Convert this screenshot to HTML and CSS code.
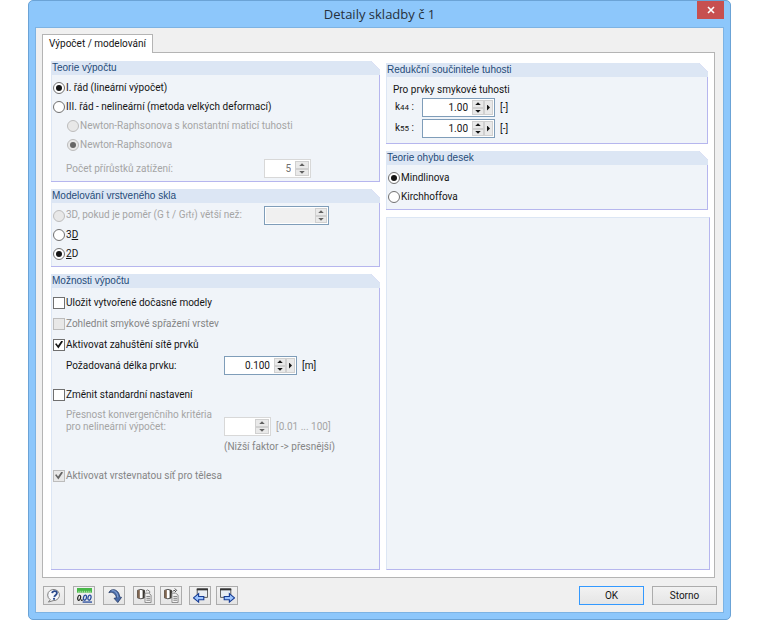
FILE: index.html
```html
<!DOCTYPE html>
<html lang="cs">
<head>
<meta charset="utf-8">
<title>Detaily skladby č 1</title>
<link rel="stylesheet" href="styles.css">
</head>
<body>
<div class="window">
  <header class="titlebar">
    <h1>Detaily skladby č 1</h1>
    <button class="close" type="button" aria-label="Zavřít"><svg width="8" height="8" viewBox="0 0 8 8"><path d="M1 1l6 6M7 1L1 7" stroke="#fff" stroke-width="1.6"/></svg></button>
  </header>
  <form class="client">
    <div class="tabs"><button class="tab" type="button">Výpočet / modelování</button></div>
    <main class="page">
      <div class="column">
        <section class="panel">
          <h2>Teorie výpočtu</h2>
          <div class="body">
            <label class="row"><input type="radio" name="theory" checked>I. řád (lineární výpočet)</label>
            <label class="row"><input type="radio" name="theory">III. řád - nelineární (metoda velkých deformací)</label>
            <label class="row nested off"><input type="radio" name="method" disabled>Newton-Raphsonova s konstantní maticí tuhosti</label>
            <label class="row nested off"><input type="radio" name="method" checked disabled>Newton-Raphsonova</label>
            <div class="row field wide spaced off">
              <label class="indent" for="steps">Počet přírůstků zatížení:</label>
              <span class="spin short disabled"><input id="steps" type="text" value="5" disabled><span class="arrows"><button type="button" class="up" aria-label="Více" disabled></button><button type="button" class="down" aria-label="Méně" disabled></button></span></span>
            </div>
          </div>
        </section>
        <section class="panel">
          <h2>Modelování vrstveného skla</h2>
          <div class="body">
            <div class="row field wide off">
              <label class="choice"><input type="radio" name="model" disabled><span>3D, pokud je poměr (G t / G<small>f</small>t<small>f</small>) větší než:</span></label>
              <span class="spin medium empty"><input type="text" aria-label="Poměr" disabled><span class="arrows"><button type="button" class="up" aria-label="Více" disabled></button><button type="button" class="down" aria-label="Méně" disabled></button></span></span>
            </div>
            <label class="row"><input type="radio" name="model"><span>3<u>D</u></span></label>
            <label class="row"><input type="radio" name="model" checked><span><u>2</u>D</span></label>
          </div>
        </section>
        <section class="panel options">
          <h2>Možnosti výpočtu</h2>
          <div class="body">
            <label class="row"><input type="checkbox">Uložit vytvořené dočasné modely</label>
            <label class="row dim"><input type="checkbox" disabled>Zohlednit smykové spřažení vrstev</label>
            <label class="row"><input type="checkbox" checked>Aktivovat zahuštění sítě prvků</label>
            <div class="row field">
              <label class="indent" for="length">Požadovaná délka prvku:</label>
              <span class="spin"><input id="length" type="text" value="0.100"><span class="arrows"><button type="button" class="up" aria-label="Více"></button><button type="button" class="down" aria-label="Méně"></button></span><button type="button" class="more" aria-label="Další"></button></span>
              <span class="unit">[m]</span>
            </div>
            <label class="row spaced"><input type="checkbox">Změnit standardní nastavení</label>
            <div class="field tall off">
              <label class="indent" for="precision">Přesnost konvergenčního kritéria<br>pro nelineární výpočet:</label>
              <span class="spin short disabled"><input id="precision" type="text" disabled><span class="arrows"><button type="button" class="up" aria-label="Více" disabled></button><button type="button" class="down" aria-label="Méně" disabled></button></span></span>
              <span class="unit">[0.01 ... 100]</span>
            </div>
            <div class="row field dim"><span class="note">(Nižší faktor -&gt; přesnější)</span></div>
            <label class="row spaced dim"><input type="checkbox" checked disabled>Aktivovat vrstevnatou síť pro tělesa</label>
          </div>
        </section>
      </div>
      <div class="column right">
        <section class="panel">
          <h2>Redukční součinitele tuhosti</h2>
          <div class="body stiffness">
            <p>Pro prvky smykové tuhosti</p>
            <div class="row factor">
              <label for="k44">k<small>44</small> :</label>
              <span class="spin"><input id="k44" type="text" value="1.00"><span class="arrows"><button type="button" class="up" aria-label="Více"></button><button type="button" class="down" aria-label="Méně"></button></span><button type="button" class="more" aria-label="Další"></button></span>
              <span class="unit">[-]</span>
            </div>
            <div class="row factor">
              <label for="k55">k<small>55</small> :</label>
              <span class="spin"><input id="k55" type="text" value="1.00"><span class="arrows"><button type="button" class="up" aria-label="Více"></button><button type="button" class="down" aria-label="Méně"></button></span><button type="button" class="more" aria-label="Další"></button></span>
              <span class="unit">[-]</span>
            </div>
          </div>
        </section>
        <section class="panel">
          <h2>Teorie ohybu desek</h2>
          <div class="body">
            <label class="row"><input type="radio" name="bending" checked>Mindlinova</label>
            <label class="row"><input type="radio" name="bending">Kirchhoffova</label>
          </div>
        </section>
        <div class="blank"></div>
      </div>
    </main>
    <footer class="footer">
      <div class="tools">
        <button type="button" aria-label="Nápověda"><svg viewBox="0 0 16 16"><path d="M3.500 12.500L1.500 15l5-1.500A6.300 6 0 1 0 3.500 12.500z" fill="#f6f8fb" stroke="#777"/><path d="M5.500 5.500C6 2.500 11 2.500 10.500 5.700 10 7.800 8 7.500 7.800 9.500" fill="none" stroke="#29498c" stroke-width="2"/><circle cx="7.500" cy="11.500" r="1.200" fill="#29498c"/></svg></button>
        <button type="button" aria-label="Jednotky a desetinná místa"><svg viewBox="0 0 16 16"><path d="M0 0h16v5H0z" fill="#48b848"/><path d="M2 5V3M4 5V3M6 5V3M8 5V3M10 5V3M12 5V3M14 5V3" stroke="#d5f3c8" stroke-width=".7"/><ellipse cx="2.300" cy="10.500" rx="1.500" ry="2.800" transform="rotate(12 2.300 10.500)" fill="none" stroke="#222" stroke-width="1.300"/><circle cx="5.200" cy="13" r=".9" fill="#222"/><g fill="none" stroke="#294d9d" stroke-width="1.400"><ellipse cx="8.500" cy="10.300" rx="1.600" ry="2.800" transform="rotate(12 8.500 10.300)"/><ellipse cx="13.300" cy="10.300" rx="1.600" ry="2.800" transform="rotate(12 13.300 10.300)"/><path d="M6 15h10"/></g></svg></button>
        <button type="button" aria-label="Použít"><svg viewBox="0 0 16 16"><path d="M2 5C4-.5 13 1 13.500 9.500l2 .5-4 5.500-4-4.500 2.500-.5C9.500 6.500 6 3.500 2 5z" fill="#4a6ca8" stroke="#1c315f" stroke-width=".8"/><path d="M5 3c3-1 6.500 2 6.500 7" fill="none" stroke="#9cb8e2" stroke-width=".9"/></svg></button>
        <button type="button" aria-label="Načíst výchozí"><svg viewBox="0 0 16 16"><path d="M.5 2.500q3.500-2 7.500 0v8q-4 2-7.500 0z" fill="#fff" stroke="#444"/><path d="M.5 2.500L3 2v9.300l-2.500-.8z" fill="#806650"/><path d="M6 2l2 .5v8l-2 .8z" fill="#3c3832"/><path d="M8.500 5.500h4l2.500 2v8H8.500z" fill="#f2f2f2" stroke="#888"/><path d="M10 9h4M10 11h4M10 13h4M9.500 3.500q1.500-3 4 0v2" fill="none" stroke="#777"/></svg></button>
        <button type="button" aria-label="Uložit jako výchozí"><svg viewBox="0 0 16 16"><path d="M.5 2.500q3.500-2 7.500 0v8q-4 2-7.500 0z" fill="#fff" stroke="#444"/><path d="M.5 2.500L3 2v9.300l-2.500-.8z" fill="#806650"/><path d="M6 2l2 .5v8l-2 .8z" fill="#3c3832"/><path d="M8.500 5.500h4l2.500 2v8H8.500z" fill="#f2f2f2" stroke="#888"/><path d="M10 9h4M10 11h4M10 13h4" fill="none" stroke="#777"/><path d="M9 4q1-1.500 3-1.500M11.500.500l2 2-2 2" fill="none" stroke="#444"/></svg></button>
        <button type="button" aria-label="Importovat"><svg viewBox="0 0 16 16"><path d="M4.500 1h11v9h-11z" fill="#e8edf3" stroke="#555"/><path d="M4 1.500h12" stroke="#333" stroke-width="2"/><path d="M.5 10.500L6 6v3h5.500v3.500H6V15z" fill="#9dc5ff" stroke="#173c94" stroke-width="1.200"/></svg></button>
        <button type="button" aria-label="Exportovat"><svg viewBox="0 0 16 16"><path d="M.5 1h11v9H.5z" fill="#e8edf3" stroke="#555"/><path d="M0 1.500h12" stroke="#333" stroke-width="2"/><path d="M15.500 10.500L10 6v3H4.500v3.500H10V15z" fill="#9dc5ff" stroke="#173c94" stroke-width="1.200"/></svg></button>
      </div>
      <div class="actions">
        <button class="primary" type="button">OK</button>
        <button type="button">Storno</button>
      </div>
    </footer>
  </form>
</div>
</body>
</html>
```
FILE: styles.css
```css
* { box-sizing: border-box; }

body {
  margin: 0;
  background: #fff;
  color: #151515;
  font: 10px/12px Roboto, "Liberation Sans", sans-serif;
}

h1, h2, p { margin: 0; font-weight: normal; }
button, input { font: inherit; color: inherit; margin: 0; padding: 0; }

.window {
  display: flex;
  flex-direction: column;
  min-height: 100vh;
  margin: 0 29px 0 28px;
  padding: 0 6px 6px;
  border: 1px solid #6ba3d6;
  border-radius: 5px;
  background: #8dc7fb;
}

.titlebar {
  position: relative;
  display: flex;
  justify-content: center;
  align-items: center;
  height: 26px;
}

.titlebar h1 {
  font: 13px/16px "Open Sans", sans-serif;
  color: #26313b;
}

.close {
  position: absolute;
  top: 0;
  right: 0;
  display: grid;
  place-items: center;
  width: 27px;
  height: 18px;
  border: 0;
  background: #c75050;
}

.client {
  flex: 1;
  display: flex;
  flex-direction: column;
  padding: 6px 8px 7px 6px;
  border: 1px solid #7db3e3;
  background: #f0f0f0;
}

.tabs { display: flex; }

.tab {
  height: 19px;
  margin-bottom: -1px;
  padding: 0 6px;
  border: 1px solid #b4b4b4;
  border-bottom: 0;
  background: #fff;
  z-index: 1;
}

.page {
  flex: 1;
  display: grid;
  grid-template-columns: 329fr 324fr;
  gap: 6px;
  padding: 8px 4px 7px 8px;
  border: 1px solid #b4b4b4;
  background: #fff;
}

.column { display: flex; flex-direction: column; gap: 7px; }
.right { padding-top: 2px; }
.right .panel { margin-right: 2px; }

.panel {
  background: #b6b6ee;
  padding: 0 1px 1px 0;
  clip-path: polygon(0 0, calc(100% - 9px) 0, 100% 9px, 100% 100%, 0 100%);
}

.options { flex: 1; display: flex; flex-direction: column; }
.options .body { flex: 1; padding-top: 4px; }

.panel h2 {
  height: 14px;
  margin-right: -1px;
  padding-left: 1px;
  background: #dce6f4;
  color: #1f4b78;
  font: 10px/14px "Liberation Sans", sans-serif;
}

.body {
  padding: 3px 1px;
  border-left: 1px solid #dce6f4;
  background: #f0f4f9;
}

.row { display: flex; align-items: center; height: 19px; }
.options .row { height: 21px; }
.nested { padding-left: 14px; }
.off { color: #a5a5a5; }
.dim { color: #858585; }
.spaced { margin-top: 5px; }
.options .spaced { margin-top: 8px; }
.indent { padding-left: 13px; }
.choice { display: flex; align-items: center; }

.field { display: grid; grid-template-columns: 171px auto 1fr; align-items: center; }
.field.wide { grid-template-columns: 211px auto 1fr; }
.tall { height: 31px; align-items: end; }
.tall .indent { align-self: center; }
.tall .unit { line-height: 19px; }
.note { grid-column: 2 / 4; }
.unit { padding-left: 5px; }
small { font-size: 8px; }

input[type="radio"], input[type="checkbox"] {
  appearance: none;
  flex: none;
  display: grid;
  place-items: center;
  width: 12px;
  height: 12px;
  margin-right: 1px;
  border: 1px solid #707070;
  background: #fff;
}

input[type="radio"] { border-radius: 50%; }
input[type="radio"]:checked::before {
  content: "";
  width: 6px;
  height: 6px;
  border-radius: 50%;
  background: #151515;
}

input[type="checkbox"]:checked::before {
  content: "";
  width: 8px;
  height: 8px;
  background: #151515;
  clip-path: polygon(0 45%, 18% 35%, 38% 62%, 82% 0, 100% 12%, 42% 100%);
}

input[type="radio"]:disabled, input[type="checkbox"]:disabled { border-color: #bcbcbc; background: #e8e8e8; }
input[type="radio"]:disabled::before, input[type="checkbox"]:disabled::before { background: #666; }

.spin {
  display: flex;
  width: 73px;
  height: 19px;
  padding: 1px;
  border: 1px solid #7f9db9;
  background: #fff;
}

.spin input {
  flex: 1;
  min-width: 0;
  padding-right: 4px;
  border: 0;
  background: transparent;
  text-align: right;
}

.short { width: 47px; }
.medium { width: 65px; }
.disabled { border-color: #d8d8d8; color: #707070; }
.empty input { background: #f0f0f0; }
.arrows { display: grid; grid-template-rows: 1fr 1fr; width: 12px; }
.disabled .arrows { width: 14px; }

.arrows button, .more {
  display: grid;
  place-items: center;
  border: 1px solid #d0d0d0;
  background: #e9e9e9;
}

.arrows button::before, .more::before {
  content: "";
  width: 6px;
  height: 3px;
  background: #151515;
  clip-path: polygon(50% 0, 100% 100%, 0 100%);
}

.arrows .down::before { clip-path: polygon(0 0, 100% 0, 50% 100%); }
.arrows button:disabled::before { background: #606060; }
.more { width: 9px; }
.more::before { width: 3px; height: 6px; clip-path: polygon(0 0, 100% 50%, 0 100%); }

.stiffness { padding: 4px 8px; }
.stiffness p { padding: 3px 0 1px; margin-left: -2px; }
.stiffness .row { height: 21px; }
.factor { display: grid; grid-template-columns: 27px auto 1fr; }

.blank {
  flex: 1;
  border: 1px solid #dce6f4;
  border-right-color: #b6b6ee;
  border-bottom-color: #b6b6ee;
  background: #f0f4f9;
}

.footer {
  display: flex;
  justify-content: space-between;
  margin-top: 8px;
}

.tools { display: flex; gap: 5px; margin-left: 1px; }
.tools button:nth-child(-n+3) { margin-right: 3px; }
.tools button:nth-child(5) { margin-right: 2px; }
.actions { display: flex; gap: 8px; margin-right: -2px; }

.footer button {
  display: grid;
  place-items: center;
  height: 19px;
  border: 1px solid #acacac;
  background: linear-gradient(#f2f2f2, #e5e5e5);
}

.tools button { width: 22px; }
.tools svg { width: 15px; height: 15px; }
.actions button { width: 65px; }
.actions .primary { border-color: #3399ff; }
```
